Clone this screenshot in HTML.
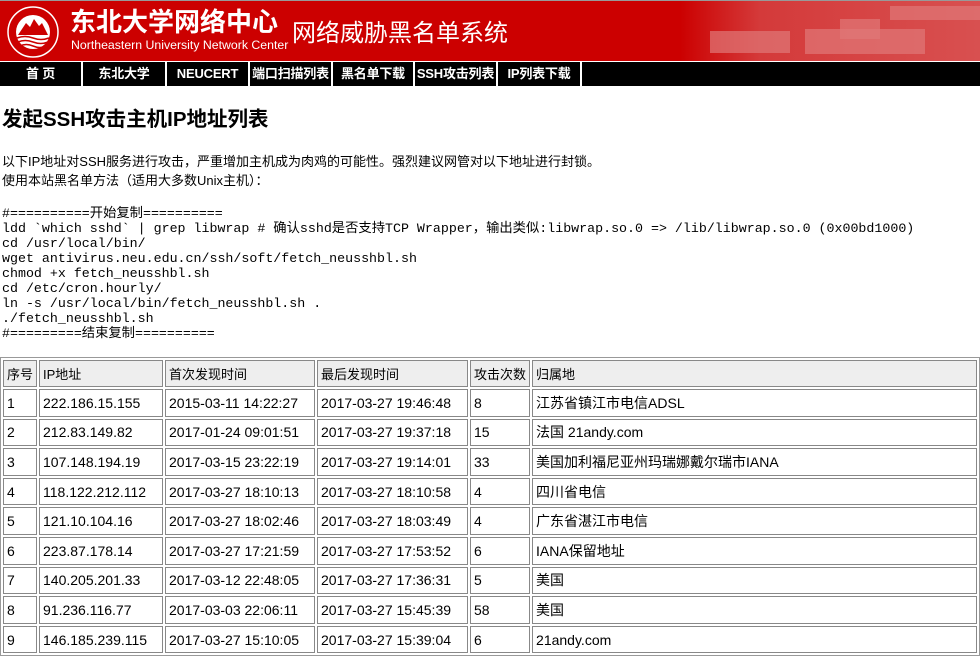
<!DOCTYPE html>
<html><head><meta charset="utf-8"><style>
*{margin:0;padding:0;box-sizing:border-box}
body{width:980px;height:650px;overflow:hidden;background:#fff;font-family:"Liberation Sans","Noto Sans CJK SC",sans-serif;color:#000}
.top{height:1px;background:#999}
.hdr{position:relative;height:60px;background:linear-gradient(90deg,#cc0000 0,#cc0000 680px,#d43a3a 760px,#d85050 980px);overflow:hidden}
.bld{position:absolute;background:#e07878;opacity:.7}
.t1{position:absolute;left:70px;top:4px;color:#fff;font-size:26px;font-weight:bold;font-family:"Noto Sans CJK SC",sans-serif;line-height:32px}
.t2{position:absolute;left:71px;top:37px;color:#fff;font-size:12.3px;line-height:15px}
.t3{position:absolute;left:292px;top:13px;color:#fff;font-size:24px;font-family:"Noto Sans CJK SC",sans-serif;line-height:34px}
.wl{height:1px;background:#fff}
.nav{height:24px;background:#000;display:flex}
.nav div{color:#fff;font-size:13px;font-weight:bold;text-align:center;line-height:24px;border-right:2px solid #fff;white-space:nowrap;letter-spacing:-0.2px}
h1{font-size:20.5px;font-weight:bold;position:absolute;left:2px;top:107px;line-height:26px}
.p{position:absolute;left:2px;font-size:13px;line-height:18px}
pre{position:absolute;left:2px;top:206px;font-family:"Liberation Mono","Noto Sans CJK SC",monospace;font-size:13.3px;line-height:15px}
table{position:absolute;left:0;top:357px;width:980px;border:1px solid #999;border-spacing:2px;font-size:14px}
td{border:1px solid #888;padding:0 3px;height:27.6px;white-space:nowrap}
tr.h td{background:#eee;height:27px;font-size:13px}
</style></head><body>
<div class="top"></div>
<div class="hdr">
<div class="bld" style="left:710px;top:30px;width:80px;height:22px"></div>
<div class="bld" style="left:805px;top:28px;width:120px;height:25px"></div>
<div class="bld" style="left:840px;top:18px;width:40px;height:20px"></div>
<div class="bld" style="left:890px;top:5px;width:90px;height:14px"></div>
<svg style="position:absolute;left:6px;top:4px" width="54" height="54" viewBox="0 0 54 54">
<circle cx="27" cy="27" r="25" fill="none" stroke="#fff" stroke-width="1.5"/>
<circle cx="27" cy="27" r="17" fill="#fff"/>
<path d="M12 30 L20 18 L24 22 L28 14 L33 21 L36 18 L42 30 Z" fill="#cc0000"/>
<path d="M11 33 Q19 30 27 33 T43 33 M12 37 Q19 34 27 37 T42 37 M14 41 Q20 38 27 41 T40 41" stroke="#cc0000" stroke-width="1.5" fill="none"/>
</svg>
<div class="t1">东北大学网络中心</div>
<div class="t2">Northeastern University Network Center</div>
<div class="t3">网络威胁黑名单系统</div>
</div>
<div class="wl"></div>
<div class="nav">
<div style="width:83px">首 页</div>
<div style="width:84px">东北大学</div>
<div style="width:83px">NEUCERT</div>
<div style="width:83px">端口扫描列表</div>
<div style="width:82px">黑名单下载</div>
<div style="width:83px">SSH攻击列表</div>
<div style="width:84px">IP列表下载</div>
</div>
<h1>发起SSH攻击主机IP地址列表</h1>
<div class="p" style="top:153px">以下IP地址对SSH服务进行攻击，严重增加主机成为肉鸡的可能性。强烈建议网管对以下地址进行封锁。</div>
<div class="p" style="top:172px">使用本站黑名单方法（适用大多数Unix主机）：</div>
<pre>#==========开始复制==========
ldd `which sshd` | grep libwrap # 确认sshd是否支持TCP Wrapper，输出类似:libwrap.so.0 => /lib/libwrap.so.0 (0x00bd1000)
cd /usr/local/bin/
wget antivirus.neu.edu.cn/ssh/soft/fetch_neusshbl.sh
chmod +x fetch_neusshbl.sh
cd /etc/cron.hourly/
ln -s /usr/local/bin/fetch_neusshbl.sh .
./fetch_neusshbl.sh
#=========结束复制==========</pre>
<table>
<tr class="h"><td style="width:34px">序号</td><td style="width:124px">IP地址</td><td style="width:150px">首次发现时间</td><td style="width:151px">最后发现时间</td><td style="width:60px">攻击次数</td><td>归属地</td></tr>
<tr><td>1</td><td>222.186.15.155</td><td>2015-03-11 14:22:27</td><td>2017-03-27 19:46:48</td><td>8</td><td>江苏省镇江市电信ADSL</td></tr>
<tr><td>2</td><td>212.83.149.82</td><td>2017-01-24 09:01:51</td><td>2017-03-27 19:37:18</td><td>15</td><td>法国 21andy.com</td></tr>
<tr><td>3</td><td>107.148.194.19</td><td>2017-03-15 23:22:19</td><td>2017-03-27 19:14:01</td><td>33</td><td>美国加利福尼亚州玛瑞娜戴尔瑞市IANA</td></tr>
<tr><td>4</td><td>118.122.212.112</td><td>2017-03-27 18:10:13</td><td>2017-03-27 18:10:58</td><td>4</td><td>四川省电信</td></tr>
<tr><td>5</td><td>121.10.104.16</td><td>2017-03-27 18:02:46</td><td>2017-03-27 18:03:49</td><td>4</td><td>广东省湛江市电信</td></tr>
<tr><td>6</td><td>223.87.178.14</td><td>2017-03-27 17:21:59</td><td>2017-03-27 17:53:52</td><td>6</td><td>IANA保留地址</td></tr>
<tr><td>7</td><td>140.205.201.33</td><td>2017-03-12 22:48:05</td><td>2017-03-27 17:36:31</td><td>5</td><td>美国</td></tr>
<tr><td>8</td><td>91.236.116.77</td><td>2017-03-03 22:06:11</td><td>2017-03-27 15:45:39</td><td>58</td><td>美国</td></tr>
<tr><td>9</td><td>146.185.239.115</td><td>2017-03-27 15:10:05</td><td>2017-03-27 15:39:04</td><td>6</td><td>21andy.com</td></tr>
</table>
</body></html>
